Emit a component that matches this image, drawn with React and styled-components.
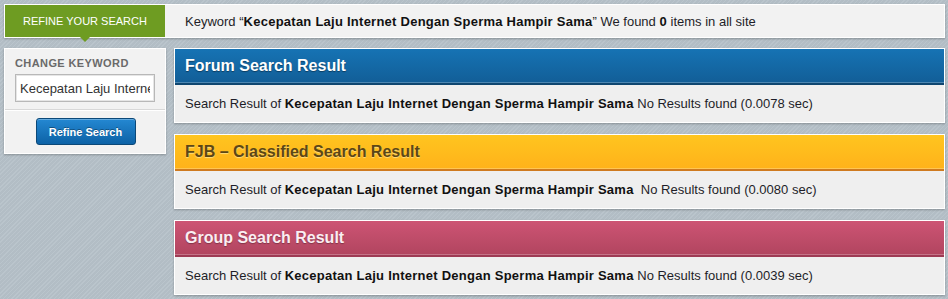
import React from "react";
import styled, { createGlobalStyle } from "styled-components";

const Global = createGlobalStyle`
  html, body { margin: 0; padding: 0; }
  body {
    width: 948px; height: 299px; overflow: hidden;
    font-family: "Liberation Sans", Arial, sans-serif;
    background-color: #b6c1c9;
    background-image: repeating-linear-gradient(135deg, rgba(255,255,255,0.06) 0px, rgba(255,255,255,0.06) 1px, rgba(0,0,0,0.02) 1px, rgba(0,0,0,0.02) 3px);
  }
`;

const Page = styled.div`
  padding: 4px 3px 0 4px;
  display: flex;
  flex-direction: column;
  gap: 10px;
`;

const TopBar = styled.div`
  display: flex;
  align-items: stretch;
  height: 32px;
  background: #f2f2f2;
  border: 1px solid #fff;
  box-shadow: 0 1px 2px rgba(0,0,0,0.25);
`;

const Tab = styled.div`
  position: relative;
  width: 160px;
  background: #6e9c22;
  color: #fff;
  font-size: 11px;
  letter-spacing: 0;
  display: flex;
  align-items: center;
  justify-content: center;
  &::after {
    content: "";
    position: absolute;
    left: 75px;
    bottom: -5px;
    border-left: 5px solid transparent;
    border-right: 5px solid transparent;
    border-top: 5px solid #6e9c22;
  }
`;

const TopText = styled.div`
  padding-left: 20px;
  display: flex;
  align-items: center;
  font-size: 13px;
  color: #1e1e28;
`;

const Line = styled.span`
  white-space: pre;
`;

const Strong = styled.b`
  color: #111;
  letter-spacing: 0.25px;
`;

const Row = styled.div`
  display: flex;
  gap: 8px;
  align-items: flex-start;
`;

const Side = styled.div`
  width: 160px;
  background: #f2f2f2;
  border: 1px solid #fff;
  box-shadow: 0 1px 2px rgba(0,0,0,0.25);
`;

const SideTop = styled.div`
  padding: 8px 10px 7px 10px;
  border-bottom: 1px solid #d8d8d8;
`;

const Label = styled.div`
  font-size: 11px;
  font-weight: bold;
  letter-spacing: 0.4px;
  color: #6a6a6a;
  margin-bottom: 5px;
`;

const Input = styled.input`
  box-sizing: border-box;
  width: 140px;
  height: 28px;
  border: 1px solid #b8b8b8;
  box-shadow: inset 0 0 0 1px #e6e6e6;
  background: #fff;
  padding: 0 4px;
  font-family: "Liberation Sans", Arial, sans-serif;
  font-size: 13px;
  color: #333;
  outline: none;
`;

const SideBottom = styled.div`
  display: flex;
  justify-content: center;
  padding: 7px 0 8px;
  border-top: 1px solid #fff;
`;

const Button = styled.button`
  width: 100px;
  height: 27px;
  border: 1px solid #0b4878;
  border-radius: 3px;
  background: linear-gradient(#2488d2, #0d62a6);
  box-shadow: inset 0 1px 0 rgba(255,255,255,0.3);
  color: #fff;
  font-family: "Liberation Sans", Arial, sans-serif;
  font-weight: bold;
  font-size: 11px;
  text-shadow: 0 -1px 0 rgba(0,0,0,0.35);
  padding: 0;
  margin-left: 1px;
`;

const Results = styled.div`
  flex: 1;
  display: flex;
  flex-direction: column;
  gap: 11px;
`;

const themes = {
  blue: { top: "#1673b4", bottom: "#125e97", line: "#0e4670", text: "#fff", shadow: "rgba(0,0,0,0.4)" },
  yellow: { top: "#ffc51f", bottom: "#ffb21a", line: "#cf7a1f", text: "#5c4716", shadow: "rgba(255,230,150,0.8)" },
  pink: { top: "#cd5474", bottom: "#b1455f", line: "#9e3b54", text: "#fbeef2", shadow: "rgba(0,0,0,0.3)" },
};

const Panel = styled.div`
  border: 1px solid #fff;
  box-shadow: 0 1px 2px rgba(0,0,0,0.25);
  background: #efefef;
`;

const Head = styled.div`
  height: 34px;
  display: flex;
  align-items: center;
  padding-left: 10px;
  background: linear-gradient(${p => themes[p.$tone].top}, ${p => themes[p.$tone].bottom});
  border-bottom: 2px solid ${p => themes[p.$tone].line};
  box-shadow: inset 0 -1px 0 rgba(255,255,255,0.25);
  color: ${p => themes[p.$tone].text};
  font-size: 16px;
  font-weight: bold;
  text-shadow: 0 1px 1px ${p => themes[p.$tone].shadow};
`;

const Body = styled.div`
  height: 37px;
  display: flex;
  align-items: center;
  padding-left: 10px;
  font-size: 13px;
  color: #1e1e28;
`;

const KW = "Kecepatan Laju Internet Dengan Sperma Hampir Sama";

const results = [
  { tone: "blue", title: "Forum Search Result", sep: " ", time: "0.0078" },
  { tone: "yellow", title: "FJB \u2013 Classified Search Result", sep: "  ", time: "0.0080" },
  { tone: "pink", title: "Group Search Result", sep: " ", time: "0.0039" },
];

export default function App() {
  return (
    <>
      <Global />
      <Page>
        <TopBar>
          <Tab>REFINE YOUR SEARCH</Tab>
          <TopText>
            <Line>
              Keyword {"\u201C"}<Strong>{KW}</Strong>{"\u201D"} We found <Strong>0</Strong> items in all site
            </Line>
          </TopText>
        </TopBar>
        <Row>
          <Side>
            <SideTop>
              <Label>CHANGE KEYWORD</Label>
              <Input defaultValue={KW} />
            </SideTop>
            <SideBottom>
              <Button>Refine Search</Button>
            </SideBottom>
          </Side>
          <Results>
            {results.map(r => (
              <Panel key={r.tone}>
                <Head $tone={r.tone}>{r.title}</Head>
                <Body>
                  <Line>
                    Search Result of <Strong>{KW}</Strong>{r.sep}No Results found ({r.time} sec)
                  </Line>
                </Body>
              </Panel>
            ))}
          </Results>
        </Row>
      </Page>
    </>
  );
}
